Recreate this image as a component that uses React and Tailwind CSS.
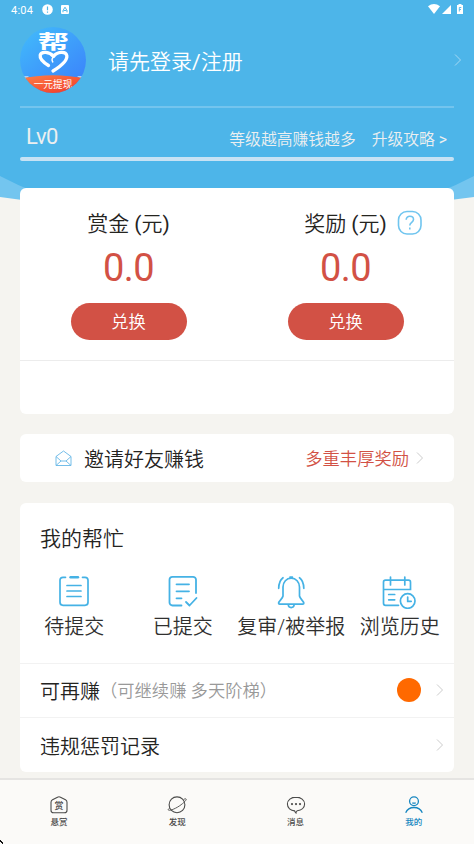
const cjk = "font-['Roboto','Noto_Sans_CJK_SC',sans-serif]"

const helpItems = [
  { label: '待提交', Icon: ClipboardIcon },
  { label: '已提交', Icon: SubmittedIcon },
  { label: '复审/被举报', Icon: BellIcon },
  { label: '浏览历史', Icon: HistoryIcon },
]

const tabs = [
  { label: '悬赏', Icon: RewardTabIcon },
  { label: '发现', Icon: PlanetIcon },
  { label: '消息', Icon: ChatIcon },
  { label: '我的', Icon: UserIcon, active: true },
]

function Chevron({ className }) {
  return (
    <svg width="8" height="14" viewBox="0 0 8 14" fill="none" stroke="currentColor" strokeWidth="1" className={className}>
      <path d="M1 1.5 6.5 7 1 12.5" />
    </svg>
  )
}

function ClipboardIcon() {
  return (
    <svg width="36" height="36" viewBox="0 0 36 36" fill="none" stroke="currentColor" strokeWidth="1.7" strokeLinecap="round">
      <path d="M9.5 4.3H7a3 3 0 0 0-3 3v22a3 3 0 0 0 3 3h22a3 3 0 0 0 3-3v-22a3 3 0 0 0-3-3h-2.5" />
      <path d="M14.5 4.2H22" strokeWidth="2.4" />
      <path d="M11 12.5h14M11 18h14M11 23.5h14" />
    </svg>
  )
}

function SubmittedIcon() {
  return (
    <svg width="36" height="36" viewBox="0 0 36 36" fill="none" stroke="currentColor" strokeWidth="1.8" strokeLinecap="round" strokeLinejoin="round">
      <path d="M16.5 32.5h-9a3 3 0 0 1-3-3V6.8a3 3 0 0 1 3-3H28a3 3 0 0 1 3 3V20" />
      <path d="M11.5 11.3H24M11.5 18.3H24M11.5 25.3h5" />
      <path d="m21 29 3.5 3.5 7-7.5" />
    </svg>
  )
}

function BellIcon() {
  return (
    <svg width="36" height="36" viewBox="0 0 36 36" fill="none" stroke="currentColor" strokeWidth="1.7" strokeLinecap="round" strokeLinejoin="round">
      <path d="M10 14c0-5 3.500-8.800 8.200-8.800S26.500 9 26.500 14v9c.5 3 4.300 5.200 4.300 7.200 0 .6-.4.900-1 .9H6.600c-.6 0-1-.3-1-.9 0-2 3.900-4.200 4.400-7.200Z" />
      <path d="M17 4.200h2.400M15.300 32c.4 3.400 5.400 3.400 5.800 0" />
      <path d="M10 4.700C6.800 7 5.800 10.500 5.700 15.300M26.500 4.700c3.200 2.300 4.200 5.800 4.300 10.600" />
    </svg>
  )
}

function HistoryIcon() {
  return (
    <svg width="36" height="36" viewBox="0 0 36 36" fill="none" stroke="currentColor" strokeWidth="1.7" strokeLinecap="round" className="-ml-[3px]">
      <path d="M18.5 32.300h-13a2 2 0 0 1-2-2V9.200a2 2 0 0 1 2-2h23a2 2 0 0 1 2 2v7.300h-27" />
      <path d="M10.500 4v8M24.800 4v8M8.700 21.500h6M8.700 26.800h6" />
      <circle cx="27.700" cy="28" r="7.300" />
      <path d="M27.700 24v4.300h3.500" />
    </svg>
  )
}

function RewardTabIcon() {
  return (
    <span className="relative flex size-5 items-center justify-center">
      <svg width="20" height="20" viewBox="0 0 20 20" fill="none" stroke="currentColor" strokeWidth="1.1" className="absolute inset-0">
        <path d="M8.500 2.200 3.500 4.800Q2 5.600 2 7.300v7.900q0 2.600 2.600 2.600h10.800q2.600 0 2.600-2.600V7.300q0-1.700-1.500-2.500l-5-2.600q-1.500-.8-3 0Z" />
      </svg>
      <span className="mt-0.5 text-[9px] leading-none">赏</span>
    </span>
  )
}

function PlanetIcon() {
  return (
    <svg width="20" height="20" viewBox="0 0 20 20" fill="none" stroke="currentColor" strokeWidth="1.1">
      <circle cx="10" cy="9.800" r="7.900" />
      <path d="M2.800 12.900c-1.300.8-1.800 1.700-1.500 2.100.6 1 6-.6 11-4s7.500-6.300 6.800-7c-.4-.5-1.300-.2-2.500.5" strokeWidth=".9" />
    </svg>
  )
}

function ChatIcon() {
  return (
    <svg width="20" height="20" viewBox="0 0 20 20" fill="none" stroke="currentColor" strokeWidth="1.1">
      <path d="M10 2.100c-4.900 0-8.600 3-8.600 6.900 0 4 3.300 6.700 7.200 6.900.2 1 .7 1.600 1.400 2.100 0-1 .3-1.900 1.300-2.200 4.100-.4 7.300-3 7.300-6.800 0-3.900-3.700-6.900-8.600-6.900Z" />
      <g fill="currentColor" stroke="none">
        <circle cx="6" cy="9.100" r="1.100" />
        <circle cx="10" cy="9.100" r="1.100" />
        <circle cx="14" cy="9.100" r="1.100" />
      </g>
    </svg>
  )
}

function UserIcon() {
  return (
    <svg width="20" height="20" viewBox="0 0 20 20" fill="none" stroke="currentColor" strokeWidth="1.3">
      <circle cx="10" cy="6.300" r="4.400" />
      <path d="M8.300 7.800q1.700.6 3.400 0M1.700 17.800c1.400-3.500 4.500-5.300 8.300-5.300s6.900 1.800 8.300 5.300" />
    </svg>
  )
}

function Avatar() {
  return (
    <svg width="66" height="66" viewBox="0 0 66 66" className="shrink-0">
      <defs>
        <linearGradient id="avatar-sky" x1="0" y1="0" x2=".8" y2="1">
          <stop offset="0" stopColor="#42bdfb" />
          <stop offset="1" stopColor="#3b82fb" />
        </linearGradient>
        <linearGradient id="avatar-band" x1="0" y1="0" x2="1" y2="1">
          <stop offset="0" stopColor="#ff8147" />
          <stop offset="1" stopColor="#ef3528" />
        </linearGradient>
        <clipPath id="avatar-clip">
          <circle cx="33" cy="33" r="33" />
        </clipPath>
      </defs>
      <g clipPath="url(#avatar-clip)">
        <rect width="66" height="66" fill="url(#avatar-sky)" />
        <path d="M0 49h9l-3 3H0ZM57 49h9v3h-5Z" fill="#a9d4fa" />
        <path d="M0 52Q33 44.500 66 52v14H0Z" fill="url(#avatar-band)" />
        <text transform="translate(33.500 21.500) scale(1.65 1)" textAnchor="middle" fill="#fff" fontSize="19" fontWeight="700">帮</text>
        <g fill="none" stroke="#fff" strokeLinecap="round" strokeLinejoin="round">
          <path d="M28.500 38.500c-4-2.500-9-6.500-8.300-10.300 1-4 9.500-3.700 13.300 1.300 3.500-5 12.300-5.500 13.300-1 1 5.700-7.300 11.500-13.800 15.500" strokeWidth="3.300" />
          <path d="M34 29.500c-2 1.500-2.500 3.500-1.200 5.500" strokeWidth="1.400" />
        </g>
        <text x="33" y="61" textAnchor="middle" fill="#fff" fontSize="9.700" fontWeight="400">一元提现</text>
      </g>
    </svg>
  )
}

function StatusBar() {
  return (
    <div className="flex h-5 items-center pl-[11px] pr-[11px] text-[11px] font-normal leading-none tracking-[0.2px] text-white">
      <span>4:04</span>
      <svg width="11" height="11" viewBox="0 0 11 11" className="-mt-px ml-[9px]">
        <circle cx="5.500" cy="5.500" r="5.300" fill="#fff" />
        <path d="M5.500 2.500v3.700M5.500 7.500v1.300" stroke="#4db5e9" strokeWidth="1.200" />
      </svg>
      <svg width="8" height="9" viewBox="0 0 8 9" className="-mt-px ml-2">
        <rect width="8" height="9" rx="1" fill="#fff" />
        <path d="M2 7.300V5.500l2-3.300 2 3.300v1.800M2.500 5.500h3" fill="none" stroke="#4db5e9" />
      </svg>
      <svg width="12" height="10" viewBox="0 0 12 10" className="-mt-[2px] ml-auto" fill="#fff">
        <path d="M0 2.200Q6-2 12 2.200L6 10Z" />
      </svg>
      <svg width="9" height="9" viewBox="0 0 9 9" className="-mt-[1px] ml-[2px]" fill="#fff">
        <path d="M9 0v9H0Z" />
      </svg>
      <svg width="6" height="10" viewBox="0 0 6 10" className="-mt-[2px] ml-[6px]">
        <path d="M1.500 1V0h3v1H6v9H0V1Z" fill="#fff" />
        <path d="M2.300 7.500v-4h2M2.300 5.500H4" fill="none" stroke="#4db5e9" strokeWidth=".9" />
      </svg>
    </div>
  )
}

function Balance({ title, help }) {
  return (
    <div className="flex w-1/2 flex-col items-center">
      <div className="relative h-[30px] whitespace-nowrap text-[21px] leading-[32px] text-[#25241f]">
        {title} <span className="font-normal">(</span>元<span className="font-normal">)</span>
        {help && (
          <svg width="26" height="26" viewBox="0 0 26 26" fill="none" stroke="#70c5ef" strokeWidth="1.600" className="absolute -right-9 top-[2px]">
            <rect x="1.500" y="1.500" width="22.500" height="22.500" rx="8.500" />
            <path d="M9.200 9.800c0-4.800 7.300-4.400 7.300-.3 0 3-3.700 2.700-3.700 6" />
            <path d="M12.800 17.500v2" />
          </svg>
        )}
      </div>
      <div className="mt-[9px] h-[42px] text-[38px] font-normal leading-[43px] tracking-[-0.6px] text-[#d25145]">0.0</div>
      <button type="button" className="mt-[14px] h-[37px] w-[116px] rounded-full bg-[#d25145] pt-px text-[17.3px] leading-[37px] text-white">兑换</button>
    </div>
  )
}

export default function App() {
  return (
    <div className={`relative flex h-[844px] w-[474px] flex-col overflow-hidden bg-[#f5f4f0] ${cjk} font-[350] text-[#25241f]`}>
      {/* curved header backdrop */}
      <svg width="474" height="240" viewBox="0 0 474 240" className="absolute left-0 top-0">
        <path d="M0 0h474v197Q237 231 0 197Z" fill="#73c5ef" />
        <path d="M0 0h474v176Q440 194 400 205H74Q34 194 0 176Z" fill="#4db5e9" />
      </svg>

      <header className="relative flex h-[188px] flex-col text-white">
        <StatusBar />
        <div className="mx-5 mt-[7px] flex h-[66px] items-center">
          <Avatar />
          <span className="ml-[22px] pt-[3px] text-[21px] leading-[30px]">
            请先登录<span className="font-normal">/</span>注册
          </span>
          <Chevron className="-mr-[8px] ml-auto text-[#a5d9f4]" />
        </div>
        <div className="mx-5 mt-[13px] h-[2px] bg-[#73c4ee]" />
        <div className="mx-5 flex h-[49px] items-center pl-[6px] pr-[7px] pt-[13px] text-[#eceff0]">
          <span className="mt-[-4px] text-[22px] font-normal leading-[28px] tracking-[-0.5px]">Lv0</span>
          <span className="ml-auto pt-px text-[15.8px]">等级越高赚钱越多</span>
          <span className="ml-4 pt-px text-[15.8px]">
            升级攻略 <span className="font-normal">&gt;</span>
          </span>
        </div>
        <div className="mx-5 h-1 rounded-full bg-[#c7e2f4]" />
      </header>

      <section className="relative mx-5 h-[225.5px] shrink-0 rounded-md bg-white pt-5">
        <div className="flex h-[152px]">
          <Balance title="赏金" />
          <Balance title="奖励" help />
        </div>
        <div className="h-px bg-[#ececec]" />
      </section>

      <section className="mx-5 mt-5 flex h-[48.5px] shrink-0 items-center rounded-md bg-white pl-[35px] pr-[30px] pt-px">
        <svg width="17" height="17" viewBox="0 0 17 17" fill="none" stroke="#65b7e7" strokeWidth=".9">
          <path d="M1 6.500 8.500 1 16 6.500v9H1ZM1 6.500l5 4.500h5l5-4.500M1 15.500 6 11M16 15.500 11 11" />
        </svg>
        <span className="ml-3 pt-[3px] text-[20px]">邀请好友赚钱</span>
        <span className="ml-auto pt-[3px] text-[17.3px] text-[#d25145]">多重丰厚奖励</span>
        <Chevron className="ml-[7px] text-[#ccc]" />
      </section>

      <section className="mx-5 mt-[20.5px] flex h-[269px] shrink-0 flex-col rounded-md bg-white">
        <h2 className="ml-5 mt-5 h-[30px] text-[21px] leading-[32px]">我的帮忙</h2>
        <div className="mt-[20px] grid h-[90px] grid-cols-4">
          {helpItems.map(({ label, Icon }) => (
            <div key={label} className="flex flex-col items-center text-[#45b2e5]">
              <Icon />
              <span className="mt-[4px] whitespace-nowrap text-[20px] leading-[28px] text-[#30302f]">{label}</span>
            </div>
          ))}
        </div>
        <div className="flex h-[54px] items-center border-t border-[#f2f2f2] pl-5 pr-[10px]">
          <span className="pt-[4px] text-[20px]">可再赚</span>
          <span className="pt-[4px] text-[17.3px] text-[#999]">（可继续赚 多天阶梯）</span>
          <span className="ml-auto size-6 rounded-full bg-[#ff6900]" />
          <Chevron className="ml-[15px] text-[#ccc]" />
        </div>
        <div className="flex h-[55px] items-center justify-between border-t border-[#f2f2f2] pl-5 pr-[10px]">
          <span className="pt-[4px] text-[20px]">违规惩罚记录</span>
          <Chevron className="text-[#ccc]" />
        </div>
      </section>

      <nav className="relative mt-auto flex h-[66px] shrink-0 border-t-2 border-[#e5e4e2] bg-[#fbfaf8] pr-px pt-[15px] font-medium">
        {tabs.map(({ label, Icon, active }) => (
          <div key={label} className={`flex w-1/4 flex-col items-center ${active ? 'text-[#1686c0]' : 'text-[#4b4b4a]'}`}>
            <Icon />
            <span className="mt-[1px] text-[8.5px] leading-3">{label}</span>
          </div>
        ))}
        <svg width="4" height="4" viewBox="0 0 4 4" className="absolute bottom-0 left-0" fill="#111">
          <path d="M0 0h1v1h1v1h1v2H2V3H1V2H0Z" />
        </svg>
      </nav>
    </div>
  )
}
